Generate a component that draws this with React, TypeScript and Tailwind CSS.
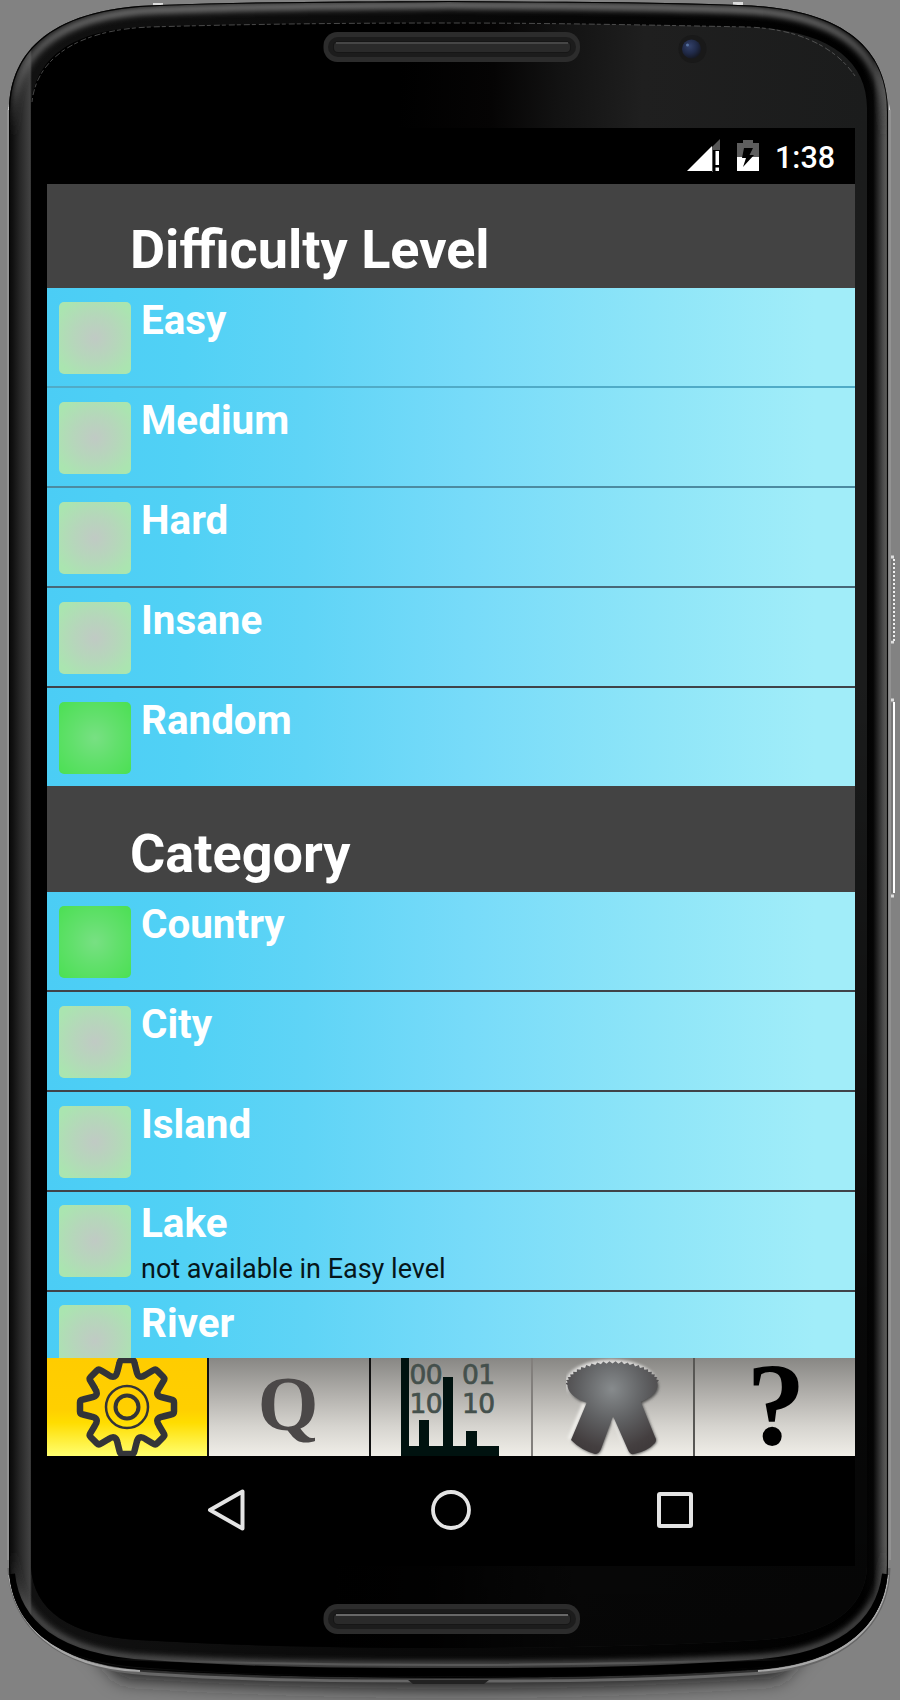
import React from "react";

type Item = { label: string; note?: string; selected?: boolean; divider?: string; raised?: boolean };

const difficulties: Item[] = [
  { label: "Easy", divider: "bg-[#50abc7]" },
  { label: "Medium", divider: "bg-[#4c8ba1]" },
  { label: "Hard", divider: "bg-[#486878]" },
  { label: "Insane", divider: "bg-[#404349]" },
  { label: "Random", selected: true },
];

const categories: Item[] = [
  { label: "Country", selected: true, divider: "bg-[#404349]" },
  { label: "City", divider: "bg-[#404349]" },
  { label: "Island", divider: "bg-[#404349]" },
  { label: "Lake", note: "not available in Easy level", divider: "bg-[#404349]", raised: true },
  { label: "River", raised: true },
];

const OUTER =
  "M9 112C9 60 40 8 160 5C260 1 350 2 449 1C550 2 640 1 738 5C858 8 888 60 888 112V1565C888 1620 848 1666 748 1670C640 1677 550 1677 449 1678C350 1677 260 1677 150 1670C50 1666 9 1620 9 1565Z";
const RIM =
  "M14 112C15 64 44 14 160 10C260 6 350 6 449 5C550 6 640 6 738 10C854 14 883 64 883 112V1562C882 1612 844 1655 748 1659C640 1665 550 1665 449 1665C350 1665 260 1665 150 1659C55 1655 15 1612 14 1562Z";
const GLASS =
  "M31 108C33 60 70 28 150 27C250 24 350 23 449 23C550 23 650 25 748 27C828 30 867 60 867 108V1567C865 1610 828 1636 760 1640C660 1646 550 1648 449 1648C350 1648 240 1646 138 1640C70 1636 33 1610 31 1567Z";

function Speaker({ y, line }: { y: number; line: string }) {
  return (
    <g>
      <rect x="323.5" y={y} width="256.5" height="30" rx="14" fill="#2c2c2c" />
      <rect x="328" y={y + 5} width="248" height="20" rx="10" fill="#1c1c1c" />
      <rect x="333" y={y + 9} width="238" height="12" rx="5" fill="#161616" />
      <rect x="334" y={y + 10} width="236" height="10" rx="4" fill="#2a2a2a" />
      <rect x="336" y={y + 10} width="232" height="2" fill={line} />
    </g>
  );
}

function PhoneBody() {
  return (
    <svg className="absolute inset-0" width="900" height="1700" viewBox="0 0 900 1700">
      <defs>
        <linearGradient id="sheen" gradientUnits="userSpaceOnUse" x1="400" y1="60" x2="868" y2="80">
          <stop offset="0" stopColor="#000" />
          <stop offset="0.2" stopColor="#050404" />
          <stop offset="0.34" stopColor="#121212" />
          <stop offset="0.52" stopColor="#1f1f1f" />
          <stop offset="1" stopColor="#1b1c1c" />
        </linearGradient>
        <linearGradient id="fade" x1="0" y1="0" x2="0" y2="1">
          <stop offset="0" stopColor="#000" stopOpacity="0" />
          <stop offset="0.4" stopColor="#000" stopOpacity="0" />
          <stop offset="0.8" stopColor="#000" stopOpacity="0.7" />
          <stop offset="1" stopColor="#000" stopOpacity="0.8" />
        </linearGradient>
        <linearGradient id="side" gradientUnits="userSpaceOnUse" x1="9" y1="0" x2="889" y2="0">
          <stop offset="0" stopColor="#080808" />
          <stop offset="0.004" stopColor="#101010" />
          <stop offset="0.012" stopColor="#262626" />
          <stop offset="0.024" stopColor="#424242" />
          <stop offset="0.026" stopColor="#111" />
          <stop offset="0.97" stopColor="#000" />
          <stop offset="0.982" stopColor="#050505" />
          <stop offset="0.993" stopColor="#4a4a4a" />
          <stop offset="0.997" stopColor="#5c5c5a" />
          <stop offset="0.998" stopColor="#202020" />
          <stop offset="1" stopColor="#303030" />
        </linearGradient>
        <linearGradient id="rimLight" x1="0" y1="0" x2="0" y2="1">
          <stop offset="0" stopColor="#8a8a8a" />
          <stop offset="0.05" stopColor="#606060" stopOpacity="0.8" />
          <stop offset="0.08" stopColor="#333" stopOpacity="0" />
          <stop offset="0.93" stopColor="#333" stopOpacity="0" />
          <stop offset="0.965" stopColor="#555" />
          <stop offset="1" stopColor="#606060" />
        </linearGradient>
        <linearGradient id="edgeLine" gradientUnits="userSpaceOnUse" x1="110" y1="0" x2="790" y2="0">
          <stop offset="0" stopColor="#555" stopOpacity="0" />
          <stop offset="0.25" stopColor="#585858" />
          <stop offset="0.75" stopColor="#585858" />
          <stop offset="1" stopColor="#555" stopOpacity="0" />
        </linearGradient>
        <radialGradient id="camera" cx="0.4" cy="0.35" r="0.65">
          <stop offset="0" stopColor="#33416a" />
          <stop offset="0.6" stopColor="#202a48" />
          <stop offset="1" stopColor="#161925" />
        </radialGradient>
        <filter id="soft" x="-10%" y="-10%" width="120%" height="120%">
          <feGaussianBlur stdDeviation="3" />
        </filter>
        <filter id="shadow" x="-20%" y="-200%" width="140%" height="500%">
          <feGaussianBlur stdDeviation="10" />
        </filter>
        <clipPath id="bodyClip">
          <path d={OUTER} />
        </clipPath>
      </defs>
      <rect width="900" height="1700" fill="#828282" />
      <path d="M70 1620H830L780 1678Q450 1700 120 1678Z" fill="#1c1c1c" filter="url(#shadow)" />
      <path
        d="M9 1568C11 1622 52 1669 150 1674C260 1681 350 1681 449 1681C550 1681 640 1681 748 1674C848 1669 888 1622 889 1568"
        fill="none"
        stroke="#666"
        strokeWidth="3"
      />
      <path
        d="M9 1575C16 1622 52 1667 140 1671M758 1671C848 1665 884 1622 888 1575"
        fill="none"
        stroke="#a8a8a8"
        strokeWidth="2"
      />
      <path d="M408 1680H489L484 1684H413Z" fill="#222" />
      <rect x="153" y="3" width="10" height="3" fill="#ddd" />
      <rect x="733" y="2" width="10" height="3" fill="#ddd" />
      <path d="M7 114L9 104V114ZM891 114L889 104V114Z" fill="#ddd" />
      <path d={OUTER} fill="url(#side)" />
      <g clipPath="url(#bodyClip)">
        <path d={RIM} fill="none" stroke="url(#rimLight)" strokeWidth="6" filter="url(#soft)" />
        <path d={OUTER} fill="none" stroke="#030303" strokeWidth="2" />
        <path
          d="M11 1574C16 1622 54 1659 150 1664C260 1672 350 1672 449 1672C550 1672 640 1672 748 1664C844 1659 880 1622 886 1574"
          fill="none"
          stroke="#000"
          strokeWidth="8"
        />
      </g>
      <path d={GLASS} fill="url(#sheen)" />
      <path d={GLASS} fill="url(#fade)" />
      <path
        d="M32 102C36 62 72 30 150 27C250 24 350 23 449 23C550 23 650 25 748 27C800 29 836 48 855 76"
        fill="none"
        stroke="#666"
        strokeWidth="1"
        strokeDasharray="4 3 6 2"
        opacity="0.7"
      />
      <path d="M110 1659Q280 1665 449 1665T790 1659" fill="none" stroke="url(#edgeLine)" strokeWidth="2" />
      <Speaker y={32} line="#464646" />
      <Speaker y={1604} line="#686868" />
      <circle cx="692.5" cy="49" r="14" fill="#191919" />
      <circle cx="691.5" cy="49" r="9.5" fill="url(#camera)" />
      <circle cx="687.5" cy="45" r="1.5" fill="#56719f" />
      <rect x="7" y="110" width="2" height="1450" fill="#929292" />
      <rect x="889" y="110" width="2" height="1450" fill="#929292" />
      <path d="M894 559V641" stroke="#f0f0f0" strokeWidth="2" strokeDasharray="2 2" />
      <path d="M891 557h3M891 642h3M891 700h3M891 896h3" stroke="#ddd" strokeWidth="3" />
      <path d="M892 559V641M892 703V893" stroke="#6c6c6c" strokeWidth="1" />
      <path d="M894 702V893" stroke="#fff" strokeWidth="2" />
    </svg>
  );
}

function StatusBar() {
  return (
    <div className="flex h-[56px] items-center justify-end bg-black pr-[18px]">
      <svg width="33" height="34" viewBox="0 0 33 34">
        <path d="M33 0V13H29V33H25V8Z" fill="#575757" />
        <path d="M0 32L25 7V32Z" fill="#fff" />
        <path d="M26 11H33V34H26Z" fill="#000" />
        <path d="M28.500 12h3.500v14h-3.500zM28.500 28.500h3.500v3.500h-3.500z" fill="#fff" />
      </svg>
      <svg className="ml-[17px]" width="22" height="34" viewBox="0 0 22 34">
        <path d="M6 1H16V4H22V18H0V4H6Z" fill="#5e5e5e" />
        <path d="M0 18H22V32H0Z" fill="#fff" />
        <path d="M7 9H16L12.500 16H17L6 28L9 19H5Z" fill="#000" />
      </svg>
      <span className="ml-[16px] w-[62px] pt-[5px] text-[30.5px] leading-none font-medium whitespace-nowrap text-white">
        1:38
      </span>
    </div>
  );
}

function Row({ item }: { item: Item }) {
  return (
    <div className="relative flex h-[100px] shrink-0 flex-col">
      <div className={`flex flex-1 items-start pl-[12px] ${item.raised ? "pt-[13px]" : "pt-[14px]"}`}>
        <div
          className={
            item.selected
              ? "size-[72px] rounded-[5px] bg-[radial-gradient(circle,#78e083_0%,#62e06c_45%,#4be053_100%)]"
              : "size-[72px] rounded-[5px] bg-[radial-gradient(circle,#c0cac4_0%,#b6d6bb_42%,#aae5b0_85%)]"
          }
        />
        <div className="-mt-[5px] ml-[10px] flex flex-col">
          <span className="text-[40.4px] leading-[47px] font-bold text-white">{item.label}</span>
          {item.note && (
            <span className="mt-[7px] text-[27px] leading-[30px] whitespace-nowrap text-[#06161a]">{item.note}</span>
          )}
        </div>
      </div>
      {item.divider && <div className={`absolute inset-x-0 bottom-0 h-[2px] ${item.divider}`} />}
    </div>
  );
}

function List({ items, className }: { items: Item[]; className: string }) {
  return (
    <div
      className={`flex flex-col overflow-hidden bg-[linear-gradient(90deg,#4bcdf5_0%,#51d1f5_17%,#5fd4f6_32%,#77dbf9_52%,#8ee5f8_75%,#a1edf9_95%)] ${className}`}
    >
      {items.map((item) => (
        <Row key={item.label} item={item} />
      ))}
    </div>
  );
}

function gearPath(): string {
  let d = "";
  for (let k = 0; k < 8; k++) {
    const a = (k * Math.PI) / 4;
    const p = (x: number, y: number) =>
      `${(x * Math.cos(a) - y * Math.sin(a)).toFixed(2)} ${(x * Math.sin(a) + y * Math.cos(a)).toFixed(2)}`;
    d += `${k === 0 ? "M" : "L"}${p(-9.5, -36)}L${p(-7.5, -44)}Q${p(-7, -47)} ${p(-4.5, -47)}L${p(4.5, -47)}Q${p(7, -47)} ${p(7.5, -44)}L${p(9.5, -36)}Q${p(10.3, -31.5)} ${p(12.6, -30.5)}Q${p(14.9, -29.6)} ${p(18.7, -32.2)}`;
  }
  return d + "Z";
}

function Gear() {
  return (
    <svg width="104" height="98" viewBox="-52 -49 104 98" fill="none" stroke="#333438">
      <path d={gearPath()} strokeWidth="6.500" strokeLinejoin="round" />
      <circle r="21" strokeWidth="2.500" />
      <circle r="11.500" strokeWidth="4" />
    </svg>
  );
}

function Chart() {
  return (
    <svg width="98" height="98" viewBox="0 0 98 98" fontFamily="'DejaVu Sans', sans-serif">
      <g fontSize="26.500" fill="#44504c" stroke="#44504c" strokeWidth="0.7">
        <text x="8.500" y="26" textLength="33">00</text>
        <text x="61" y="26" textLength="33">01</text>
        <text x="8.500" y="55" textLength="33">10</text>
        <text x="61" y="55" textLength="33">10</text>
      </g>
      <path d="M0 0H8V88H18V62H28V88H42V19H52V88H65V73H76V88H98V98H0Z" fill="#00120f" />
    </svg>
  );
}

function scallops(): string {
  const steps = 96;
  const points = Array.from({ length: steps }, (_, i) => {
    const a = (i / steps) * Math.PI * 2 + Math.PI;
    const bump = i % 2 && i < 46 ? 2.4 : 0;
    const x = 46.5 + (45 + bump) * Math.cos(a);
    const y = 27 + (21.5 + bump) * Math.sin(a);
    return `${x.toFixed(1)} ${y.toFixed(1)}`;
  });
  return `M${points.join("L")}Z`;
}

function Rosette() {
  const legs = "M21 44L5 82Q15 92 29 96Q33 96 35 91L47 58L62 92Q64 97 68 96Q82 93 89 85Q91 82 89 79L74 42Z";
  return (
    <svg width="98" height="98" viewBox="0 0 98 98">
      <defs>
        <radialGradient id="medal" gradientUnits="userSpaceOnUse" cx="46" cy="31" r="66">
          <stop offset="0" stopColor="#878b8d" />
          <stop offset="0.5" stopColor="#5f6062" />
          <stop offset="0.9" stopColor="#443f40" />
          <stop offset="1" stopColor="#403b3c" />
        </radialGradient>
        <filter id="glow" x="-20%" y="-20%" width="140%" height="140%">
          <feGaussianBlur stdDeviation="1.500" />
        </filter>
      </defs>
      <g filter="url(#glow)">
        <path d={legs} fill="#f4f3ef" transform="translate(-3 -2)" />
        <ellipse cx="45" cy="25" rx="46" ry="23.500" fill="#dedddb" />
        <path d={legs} fill="#444" transform="translate(0.500 0.500)" />
        <ellipse cx="47.500" cy="28.500" rx="45" ry="21.500" fill="#444" />
      </g>
      <path d={legs} fill="url(#medal)" />
      <path d={scallops()} fill="url(#medal)" />
    </svg>
  );
}

const tabShade = "bg-[linear-gradient(180deg,#888784_0%,#b5b3af_40%,#d6d4cf_70%,#f0eee8_100%)]";

function TabBar() {
  return (
    <div className="flex h-[98px] shrink-0 bg-black">
      <div className="flex w-[160px] justify-center bg-[linear-gradient(180deg,#ffcc00_0%,#ffcf00_52%,#ffdd00_66%,#ffff70_100%)]">
        <Gear />
      </div>
      <div className="w-[2px] bg-[#111]" />
      <div className={`flex w-[160px] justify-center pr-[2px] ${tabShade}`}>
        <span className="font-['Liberation_Serif',serif] text-[78px] leading-[92px] font-bold text-[#4b4848]">Q</span>
      </div>
      <div className="w-[2px] bg-[#111]" />
      <div className={`w-[160px] pl-[30px] ${tabShade}`}>
        <Chart />
      </div>
      <div className="w-[2px] bg-[#827f7c]" />
      <div className={`w-[160px] pl-[33px] ${tabShade}`}>
        <Rosette />
      </div>
      <div className="w-[2px] bg-[#585754]" />
      <div className={`flex flex-1 justify-center pl-[2px] ${tabShade}`}>
        <span className="font-['Liberation_Serif',serif] text-[118px] leading-[93px] font-bold text-black">?</span>
      </div>
    </div>
  );
}

function NavBar() {
  return (
    <div className="flex h-[110px] shrink-0 pt-[33px] pl-[160px]">
      <svg width="38" height="42" viewBox="0 0 38 42">
        <path d="M3 21L35.500 2.500V39.500Z" fill="none" stroke="#e4e4e4" strokeWidth="4" strokeLinejoin="round" />
      </svg>
      <svg className="ml-[185px]" width="42" height="42" viewBox="0 0 42 42">
        <circle cx="21" cy="21" r="18" fill="none" stroke="#e4e4e4" strokeWidth="3.800" />
      </svg>
      <svg className="ml-[182px]" width="42" height="42" viewBox="0 0 42 42">
        <rect x="5" y="5" width="32" height="32" rx="1" fill="none" stroke="#e4e4e4" strokeWidth="4" />
      </svg>
    </div>
  );
}

export default function App() {
  return (
    <div className="relative h-[1700px] w-[900px] overflow-hidden font-['Roboto',sans-serif]">
      <PhoneBody />
      <div className="relative pt-[128px] pl-[47px]">
        <div className="flex w-[808px] flex-col bg-black">
          <StatusBar />
          <h2 className="h-[104px] bg-[#434343] pt-[34px] pl-[83px] text-[54px] leading-[64px] font-bold whitespace-nowrap text-white">
            Difficulty Level
          </h2>
          <List items={difficulties} className="h-[498px]" />
          <h2 className="h-[106px] bg-[#434343] pt-[36px] pl-[83px] text-[54px] leading-[64px] font-bold whitespace-nowrap text-white">
            Category
          </h2>
          <List items={categories} className="h-[466px]" />
          <TabBar />
          <NavBar />
        </div>
      </div>
    </div>
  );
}
